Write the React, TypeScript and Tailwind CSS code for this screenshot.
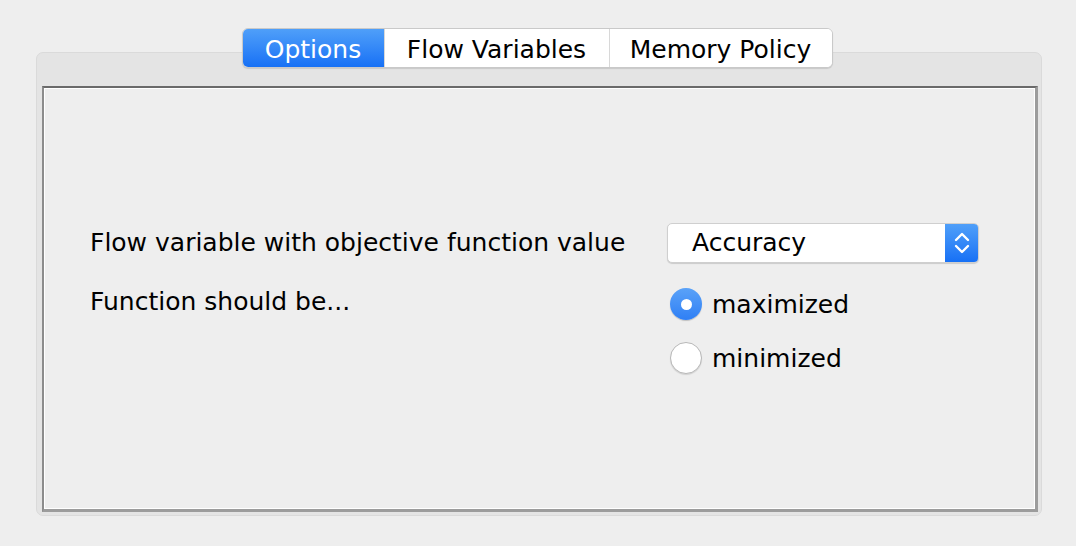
import React, { useState } from "react";

const font = { fontFamily: '"DejaVu Sans", "Liberation Sans", sans-serif' };

function Radio({ checked, label, onClick }: { checked: boolean; label: string; onClick: () => void }) {
  return (
    <button onClick={onClick} className="flex items-center h-[32px] text-left pl-[3px]">
      {checked ? (
        <span className="w-[32px] h-[32px] rounded-full bg-gradient-to-b from-[#5aa2f8] to-[#2f7ff5] flex items-center justify-center shadow-[0_1px_1px_rgba(0,0,0,0.2)]">
          <span className="w-[11px] h-[11px] rounded-full bg-white" />
        </span>
      ) : (
        <span className="w-[32px] h-[32px] rounded-full bg-white border border-[#b8b8b8] shadow-[0_1px_1px_rgba(0,0,0,0.12)]" />
      )}
      <span className="ml-[10px] text-[25px] text-black leading-none">{label}</span>
    </button>
  );
}

export default function App() {
  const [tab, setTab] = useState("Options");
  const [mode, setMode] = useState("maximized");
  const tabs = [
    { name: "Options", w: "w-[141px]" },
    { name: "Flow Variables", w: "w-[225px]" },
    { name: "Memory Policy", w: "w-[223px]" },
  ];

  return (
    <div className="w-[1076px] h-[546px] bg-[#eeeeee] pt-[52px] pl-[36px]" style={font}>
      <div className="w-[1006px] h-[464px] rounded-[7px] bg-[#e4e4e4] border border-[#dadada] pl-[5px] pr-[3px] pb-[3px] flex flex-col">
        <div className="flex justify-center -mt-[25px] pr-[6px]">
          <div className="flex h-[40px] rounded-[6px] bg-white border border-[#c9c9c9] shadow-[0_1px_1px_rgba(0,0,0,0.12)] overflow-hidden">
            {tabs.map((t, i) => (
              <button
                key={t.name}
                onClick={() => setTab(t.name)}
                className={`${t.w} h-full flex items-center justify-center pt-[3px] text-[25px] ${
                  tab === t.name
                    ? "bg-gradient-to-b from-[#4f9ff9] to-[#1670f5] text-white"
                    : "bg-white text-black"
                } ${i > 0 ? "border-l border-[#d8d8d8]" : ""}`}
              >
                {t.name}
              </button>
            ))}
          </div>
        </div>
        <div className="mt-[18px] flex-1 border-t-2 border-l-2 border-r-[3px] border-b-[3px] border-t-[#6a6a6a] border-l-[#8c8c8c] border-r-[#9c9c9c] border-b-[#9c9c9c]">
          <div className="h-full border border-white bg-[#eeeeee] pl-[45px] pt-[134px]">
            <div className="grid grid-cols-[577px_312px] gap-y-[25px]">
              <div className="h-[40px] flex items-center text-[25px] text-black">
                Flow variable with objective function value
              </div>
              <div className="h-[40px] w-[312px] rounded-[5px] bg-white border border-[#cfcfcf] shadow-[0_1px_1px_rgba(0,0,0,0.15)] flex overflow-hidden">
                <div className="flex-1 flex items-center pl-[24px] text-[25px] text-black">Accuracy</div>
                <div className="w-[33px] h-full bg-gradient-to-b from-[#4f9ff9] to-[#1670f5] flex items-center justify-center">
                  <svg width="18" height="28" viewBox="0 0 18 28" fill="none" stroke="white" strokeWidth="2.4" strokeLinecap="round" strokeLinejoin="round">
                    <path d="M3 11 L9 5 L15 11" />
                    <path d="M3 17 L9 23 L15 17" />
                  </svg>
                </div>
              </div>
              <div className="h-[32px] flex items-center text-[25px] text-black -mt-[2px]">Function should be...</div>
              <div className="flex flex-col gap-[22px]">
                <Radio checked={mode === "maximized"} label="maximized" onClick={() => setMode("maximized")} />
                <Radio checked={mode === "minimized"} label="minimized" onClick={() => setMode("minimized")} />
              </div>
            </div>
          </div>
        </div>
      </div>
    </div>
  );
}
